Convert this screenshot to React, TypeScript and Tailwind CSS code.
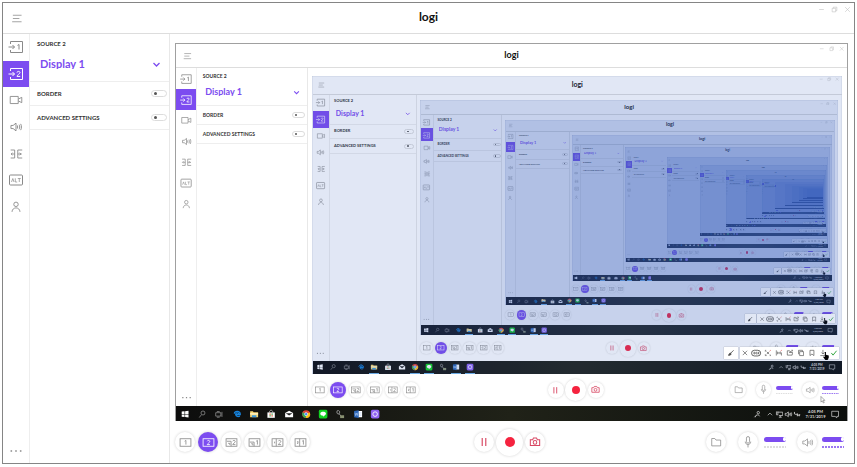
import React from "react";
import type { CSSProperties, ReactNode } from "react";
import { clsx } from "clsx";

/* Every mirrored screen is drawn at this share of the one that contains it. */
const MIRROR_RATIO = 0.788;
/* From this depth on a screen is too small for its texts and icons. */
const DISTANT_DEPTH = 12;
const MAX_DEPTH = 17;

/* Rescales Tailwind's spacing and text tokens for one mirror level. */
function tokens(depth: number): CSSProperties {
  const scale = Math.pow(MIRROR_RATIO, depth);
  const text = (size: number) => `${Math.max(1, Math.round(size * scale))}px`;
  return {
    "--spacing": `${4 * scale}px`,
    "--text-xs": text(5),
    "--text-sm": text(6),
    "--text-base": text(11),
    "--text-lg": text(12),
  } as CSSProperties;
}

type IconProps = { className?: string; box?: string; children: ReactNode; width?: number };

function Icon({ className = "size-4.5", box = "0 0 18 18", width = 1, children }: IconProps) {
  return (
    <svg
      viewBox={box}
      className={clsx("shrink-0", className)}
      fill="none"
      stroke="currentColor"
      strokeWidth={width}
      aria-hidden="true"
    >
      {children}
    </svg>
  );
}

function SourceIcon({ n }: { n: 1 | 2 }) {
  return (
    <Icon>
      <path d="M3.500 6V3.500h12v11h-12V12M1.500 9h6M5.500 7l2 2-2 2" />
      {n === 1 ? <path d="M10.500 7.400 12 6.500v5" /> : <path d="M10 7.600c0-1.600 3-1.600 3 0 0 1.200-3 2.300-3 3.800h3.200" />}
    </Icon>
  );
}

const speaker = (
  <>
    <path d="M2.500 7h2.800L9 4v10l-3.700-3H2.500z" />
    <path d="M11 7v4M13 6c1 1.600 1 4.400 0 6M15 5c1.300 2.400 1.300 5.600 0 8" />
  </>
);

const navItems: { name: string; icon: ReactNode }[] = [
  { name: "Source 1", icon: <SourceIcon n={1} /> },
  { name: "Source 2", icon: <SourceIcon n={2} /> },
  {
    name: "Camera",
    icon: (
      <Icon className="size-4">
        <path d="M2.500 5h9v8h-9zM11.500 8l4-2v6l-4-2" />
      </Icon>
    ),
  },
  { name: "Audio", icon: <Icon className="size-3.5" width={1.2}>{speaker}</Icon> },
  {
    name: "Transitions",
    icon: (
      <Icon className="size-4">
        <path d="M3 4.500h4.500v9H3M4 9h3.500M5 7.500 3.500 9 5 10.500M16 4.500h-5v9h5M11 9h4.500M13 7.500 14.500 9 13 10.500" />
      </Icon>
    ),
  },
  {
    name: "Alt",
    icon: (
      <Icon>
        <rect x="2.500" y="4" width="13" height="10" rx="1" />
        <path d="m4.500 11 1.300-3.500L7 11M8.300 7.300V11h1.900M10.800 7.500h3M12.300 7.500V11" strokeWidth=".7" />
      </Icon>
    ),
  },
  {
    name: "Account",
    icon: (
      <Icon className="size-4">
        <circle cx="9" cy="6" r="2.500" />
        <path d="M4.500 14.500c.3-6 8.700-6 9 0" />
      </Icon>
    ),
  },
];

function Toggle({ label }: { label: string }) {
  return (
    <label className="flex h-6 items-center justify-between border-b border-[#eeeeee] pr-0.5 pl-1.75 text-sm leading-none font-bold whitespace-nowrap text-[#333333]">
      {label}
      <input
        type="checkbox"
        className="flex h-1.75 w-4 shrink-0 appearance-none items-center rounded-full border border-[#dcdcdc] bg-white px-0.5 before:block before:size-0.75 before:rounded-full before:bg-[#555555] before:content-['']"
      />
    </label>
  );
}

function RoundButton({ name, className, children }: { name: string; className: string; children: ReactNode }) {
  return (
    <button
      type="button"
      aria-label={name}
      className={clsx(
        "flex shrink-0 items-center justify-center rounded-full shadow-[0_0_calc(var(--spacing)*0.75)_rgba(0,0,0,0.18)]",
        className,
      )}
    >
      {children}
    </button>
  );
}

const one = "M0 1 1.500 0v5";
const two = "M0 1c.3-1.500 3-1.300 3 .3C3 2.700 0 3.800 0 5h3.200";

const layouts: { name: string; art: ReactNode }[] = [
  { name: "Source 1 only", art: <path d={one} transform="translate(8 6.500)" /> },
  { name: "Source 2 only", art: <path d={two} transform="translate(7.500 6.500)" /> },
  {
    name: "Source 2 with inset",
    art: (
      <>
        <path d="M3.500 7.500h5v6M5 10h2v2" />
        <path d={two} transform="translate(10.500 6.500)" />
      </>
    ),
  },
  {
    name: "Source 1 with inset",
    art: (
      <>
        <path d="M3.500 8.500h5v5M5 10.500h2v2" />
        <path d={one} transform="translate(11 6.500)" />
      </>
    ),
  },
  {
    name: "Narrow 1, wide 2",
    art: (
      <>
        <path d="M7.500 4.500v9M5.500 8v2" />
        <path d={two} transform="translate(10 6.500)" />
      </>
    ),
  },
  {
    name: "Split 2 and 1",
    art: (
      <>
        <path d="M8 4.500v9M5 8h1.200v1L5 10h1.300" />
        <path d={one} transform="translate(11 6.500)" />
      </>
    ),
  },
];

function Level({ name, active }: { name: string; active: boolean }) {
  return (
    <div className="flex w-5.5 shrink-0 flex-col gap-1">
      <input
        type="range"
        aria-label={name}
        defaultValue={100}
        className="block h-1.25 w-full appearance-none rounded-full bg-[#7c4cf0] [&::-webkit-slider-thumb]:h-1 [&::-webkit-slider-thumb]:w-0.75 [&::-webkit-slider-thumb]:appearance-none [&::-webkit-slider-thumb]:rounded-full [&::-webkit-slider-thumb]:bg-white"
      />
      <svg viewBox="0 0 22 2" className={clsx("h-0.5 w-full", active ? "text-[#7c4cf0]" : "text-[#d4d4d4]")} aria-hidden="true">
        <path d="M0 1h22" stroke="currentColor" strokeWidth="1.500" strokeDasharray="2 1" />
      </svg>
    </div>
  );
}

function Controls() {
  return (
    <div className="mr-1 grid min-h-0 flex-1 grid-cols-[1fr_auto_1fr] items-center text-[#8a8a8a]">
      <div className="flex gap-0.75">
        {layouts.map((layout, i) => (
          <RoundButton
            key={layout.name}
            name={layout.name}
            className={clsx("size-5", i === 1 ? "bg-[#7c4cf0] text-white" : "bg-white")}
          >
            <Icon className="size-3.75">
              <rect x="2.500" y="4.500" width="13" height="9" />
              {layout.art}
            </Icon>
          </RoundButton>
        ))}
      </div>
      <div className="flex items-center gap-0.5 text-[#d84863]">
        <RoundButton name="Pause" className="size-5 bg-white">
          <Icon className="size-4">
            <path d="M7 4.500v9M11 4.500v9" strokeWidth="1.300" />
          </Icon>
        </RoundButton>
        <RoundButton name="Record" className="size-6.75 bg-white">
          <span className="size-2.5 rounded-full bg-[#f5233f]" />
        </RoundButton>
        <RoundButton name="Take snapshot" className="size-5 bg-white">
          <Icon className="size-3.5" width={1.3}>
            <path d="M3 6h3l1-2h4l1 2h3v7.500H3z" />
            <circle cx="9" cy="9.500" r="2.300" />
          </Icon>
        </RoundButton>
      </div>
      <div className="flex items-center justify-end">
        <RoundButton name="Open folder" className="mr-3 size-5 bg-white">
          <Icon className="size-3.5">
            <path d="M3.500 4.500h4l1.500 2h6v7.500H3.500z" />
          </Icon>
        </RoundButton>
        <RoundButton name="Microphone" className="mr-1.5 size-5 bg-white">
          <Icon className="size-3.5">
            <rect x="7" y="2" width="4" height="8.500" rx="2" />
            <path d="M5.500 8.500c0 5 7 5 7 0M9 12.500V16" />
          </Icon>
        </RoundButton>
        <Level name="Microphone volume" active={false} />
        <RoundButton name="Speaker" className="mr-1.25 ml-2.75 size-5 bg-white">
          <Icon className="size-3.25">{speaker}</Icon>
        </RoundButton>
        <Level name="Speaker volume" active />
      </div>
    </div>
  );
}

const apps: { name: string; open?: boolean; art: ReactNode }[] = [
  {
    name: "Start",
    art: <path d="M3 4.500 8 4v4.700H3zM9 3.800l6-.8v5.700H9zM3 9.500h5v4.700l-5-.7zM9 9.500h6V15l-6-.8z" fill="white" />,
  },
  {
    name: "Search",
    art: <path d="M7.500 10.500 4 15M14 7a3.500 3.500 0 1 1-7 0 3.500 3.500 0 0 1 7 0z" stroke="#bbb" />,
  },
  { name: "Task view", art: <path d="M3 6.500h9v6H3zM14 5v9M5 4.500h5M5 14.500h5" stroke="#bbb" /> },
  {
    name: "Edge",
    art: <path d="M4 8c1-5 10-5 10.500 1v1H6.500c.5 4 5 3.500 7.500 2.500M6.500 9c.5-3 5-3 5.500 0" stroke="#1683dd" strokeWidth="2.200" />,
  },
  {
    name: "Files",
    open: true,
    art: (
      <>
        <path d="M2 4h5l1 1.500h8v9H2z" fill="#f7d774" />
        <path d="M5 11h8v3.500H5z" fill="#3b9be0" />
        <path d="M2 7h14v3H2z" fill="#fff0b8" />
      </>
    ),
  },
  {
    name: "Store",
    art: (
      <>
        <path d="M2.500 6h13v9.500h-13z" fill="white" />
        <path d="M6 6c0-5 6-5 6 0" stroke="white" />
        <path d="M6 8h2.500v2H6zM9.500 11H12v2H9.500z" fill="#e35b3d" />
        <path d="M9.500 8H12v2H9.500zM6 11h2.500v2H6z" fill="#45a44a" />
      </>
    ),
  },
  {
    name: "Mail",
    art: (
      <>
        <path d="m2 7 7-4 7 4v7.500H2z" fill="white" />
        <path d="m3 7.500 6 4 6-4z" fill="#222" />
      </>
    ),
  },
  {
    name: "Chrome",
    open: true,
    art: (
      <>
        <circle cx="9" cy="9" r="7" fill="#e44335" />
        <path d="M9 9 3 5.500A7 7 0 0 0 9 16z" fill="#33a852" />
        <path d="m9 9 6.500-3A7 7 0 0 1 8.500 16z" fill="#fbc116" />
        <circle cx="9" cy="9" r="2.800" fill="#4587f3" stroke="white" />
      </>
    ),
  },
  {
    name: "Line",
    open: true,
    art: (
      <>
        <rect x="1.500" y="1.500" width="15" height="15" rx="2.500" fill="#12d321" />
        <path d="M4 8c0-4.500 10-4.500 10 0 0 2.500-3 4-5 5.500V12c-3 0-5-1.500-5-4z" fill="white" />
      </>
    ),
  },
  {
    name: "Device tool",
    art: (
      <>
        <path d="M4 3c3-1 5 1 4 4L6.500 9c-3 0-4-3-2.500-6zM7 8l4 5" stroke="#999" strokeWidth="1.600" />
        <path d="M9 11h7v5H9z" fill="#8a9272" />
      </>
    ),
  },
  {
    name: "Word",
    open: true,
    art: (
      <>
        <path d="M9 3.500h7v11H9z" fill="white" />
        <path d="M2 3.500 10 2v14l-8-1.500z" fill="#2b66b8" />
        <path d="m3.500 6.500 1 5 1.500-4 1.500 4 1-5M11 6.500h4M11 9h4M11 11.500h4" stroke="#bcd3f3" />
      </>
    ),
  },
  {
    name: "Capture",
    open: true,
    art: (
      <>
        <rect x="1.500" y="1.500" width="15" height="15" rx="3" fill="#8e62f2" />
        <circle cx="9" cy="9" r="4" stroke="white" strokeWidth="1.500" />
      </>
    ),
  },
];

function Taskbar({ outlined }: { outlined: boolean }) {
  return (
    <div className="flex h-5 shrink-0 items-center justify-between bg-linear-to-r from-[#0d0d0d] via-[#202218] to-[#0c0f0d]">
      <div className="flex h-full">
        {apps.map((app) => (
          <button
            key={app.name}
            type="button"
            aria-label={app.name}
            className="flex h-full w-5.5 items-center justify-center text-transparent"
          >
            <span
              className={clsx(
                "flex h-full w-4 items-center justify-center",
                outlined && app.open && "border-b border-[#76b9ed]",
              )}
            >
              <Icon className="size-3.25">{app.art}</Icon>
            </span>
          </button>
        ))}
      </div>
      <div className="flex h-full items-center gap-0.25 pr-2.25 text-[#dddddd]">
        <Icon className="mr-1 size-2.75" width={1.5}>
          <circle cx="11" cy="5.500" r="2.500" />
          <path d="M5 15c0-6 7-6 9-2M3 15l4-4" />
        </Icon>
        <Icon className="size-2.5" width={1.5}>
          <path d="m4 12 5-5 5 5" />
        </Icon>
        <Icon className="size-2.75" width={1.5}>
          <path d="M5 4.500h11v7H8M3 3v7h3V3M11 12v3M8 15h6" />
        </Icon>
        <Icon className="size-2.75" width={1.5}>
          {speaker}
        </Icon>
        <Icon className="mr-0.75 size-2.75" width={1.8}>
          <path d="M3 4v4c2 2 4 0 6 2s4 0 6 0M9 7v6M13 9v4" />
        </Icon>
        <div className="min-w-6.5 text-center text-xs leading-1.75 font-bold whitespace-nowrap">
          4:05 PM
          <br />
          7/31/2019
        </div>
        <Icon className="ml-1 size-3.25" width={1.2}>
          <path d="M3 4h12v9h-3v2.500L9 13H3z" />
        </Icon>
      </div>
    </div>
  );
}

const snipTools: { name: string; art: ReactNode }[] = [
  { name: "Discard", art: <path d="m4 4 10 10M14 4 4 14" /> },
  {
    name: "Recognise text",
    art: (
      <>
        <rect x="1" y="4" width="16" height="10" rx="5" />
        <path d="M5 7.500h2v3H5zM11 7.500H8.800v3H11M12.500 11V7.500H14v2h-1.500l1.500 1.500" strokeWidth="1" />
      </>
    ),
  },
  {
    name: "Crop",
    art: (
      <>
        <path d="M3 6V3h2M3 12v3h3M6 6l6 6M11.500 6.500 6 12M13 15h2v-2" />
        <path d="m12.500 5 4-3" stroke="#e05f5f" />
      </>
    ),
  },
  {
    name: "Scroll capture",
    art: (
      <>
        <path d="M3 3v12M6 6v6M6 9h6M12 6v6M15 8v7" />
        <path d="m12.500 5 4-3" stroke="#e05f5f" />
      </>
    ),
  },
  { name: "Save to folder", art: <path d="M3 4h5l1 2h4M3 4v10h11l1-6H7M12 3h4v3" /> },
  { name: "Copy", art: <path d="M6 6h9v9H6zM3.500 12V3h9v3" /> },
  { name: "Pin", art: <path d="M4.500 3h9v12L9 11.500 4.500 15z" /> },
  { name: "Download", art: <path d="M9 2v9M5.500 8 9 11.500 12.500 8M3 15h12" /> },
  { name: "Confirm", art: <path d="m3 9 4 5 8-10" stroke="#2fa43c" strokeWidth="2.200" /> },
];

/* The capture toolbar floats over the selected part of the screen. */
function SnipToolbar() {
  return (
    <div className="absolute right-1 bottom-4.75 flex h-3.75 gap-0.5 text-[#444444]">
      <button
        type="button"
        aria-label="Brush"
        className="flex h-full w-4.5 items-center justify-center bg-white shadow-[0_0_1px_rgba(0,0,0,0.4)]"
      >
        <Icon className="size-2.5" width={1.8}>
          <path d="m15 3-7 7M8 9c-3 0-2 4-5 5 3 1 7 0 6-4" fill="currentColor" />
        </Icon>
      </button>
      <div className="flex h-full items-center bg-white shadow-[0_0_1px_rgba(0,0,0,0.4)]">
        {snipTools.map((tool) => (
          <button
            key={tool.name}
            type="button"
            aria-label={tool.name}
            className="flex h-full w-3.5 items-center justify-center"
          >
            <Icon className={tool.name === "Recognise text" ? "size-3.25" : "size-2.5"} width={1.4}>
              {tool.art}
            </Icon>
          </button>
        ))}
      </div>
      <svg viewBox="0 0 12 14" className="absolute top-1.75 right-3 h-2.5 w-2.5" aria-hidden="true">
        <path d="M4 0h2v5l5 1v4l-2 4H5L1 9l1-1 2 1z" fill="black" />
      </svg>
    </div>
  );
}

function WindowButtons() {
  return (
    <div className="flex items-start justify-end gap-1.5 pt-0.75 pr-0.75 text-[#c0c0c0]">
      <button type="button" aria-label="Minimize">
        <Icon className="size-1.75" width={1.5}>
          <path d="M3 9h12" />
        </Icon>
      </button>
      <button type="button" aria-label="Restore">
        <Icon className="size-1.75" width={1.5}>
          <path d="M3 6h9v9H3zM6 6V3h9v9h-3" />
        </Icon>
      </button>
      <button type="button" aria-label="Close">
        <Icon className="size-1.75" width={1.5}>
          <path d="m3 3 12 12M15 3 3 15" />
        </Icon>
      </button>
    </div>
  );
}

/* A far mirror level, reduced to its marker, its bottom bar and the next level. */
function DistantScreen({ depth }: { depth: number }) {
  return (
    <div style={tokens(depth)} className="relative flex h-120 min-w-0 flex-col overflow-hidden bg-white">
      <div className="flex min-h-0 flex-1">
        <div className="w-6.75 shrink-0 pt-14.5">
          {depth < 13 && <div className="h-6.75 bg-[#7c4cf0]" />}
        </div>
        <div className="w-35 shrink-0" />
        <div className="min-w-0 flex-1 px-1.75 pt-10">
          <div className="relative">
            {depth < MAX_DEPTH && <DistantScreen depth={depth + 1} />}
            <div className="absolute inset-0 bg-[#3760ba]/15" />
          </div>
        </div>
      </div>
      <div className="h-5 shrink-0 bg-[#14181a]" />
    </div>
  );
}

function Screen({ depth }: { depth: number }) {
  const mirrored = depth > 0;
  const outlined = depth < 6;
  return (
    <div
      style={tokens(depth)}
      inert={mirrored}
      className={clsx(
        "relative flex min-w-0 flex-col overflow-hidden bg-white",
        depth === 0 && "border border-[#858585]",
        depth === 1 && "h-120 border-x border-t border-[#a0a0a0]",
        depth > 1 && "h-120 px-0.25 shadow-[inset_0_0_1px_#64748b]",
      )}
    >
      <header
        className={clsx(
          "grid h-7.75 shrink-0 grid-cols-[1fr_auto_1fr]",
          outlined && "border-b border-[#dddddd]",
        )}
      >
        <button type="button" aria-label="Menu" className="flex w-6.75 items-center justify-center text-[#808080]">
          <Icon className="size-3.25">
            <path d="M4 4.500h12M4 9h9M3 13.500h13" />
          </Icon>
        </button>
        <h1 className="self-center pb-0.5 text-lg leading-none font-bold text-[#111111]">logi</h1>
        <WindowButtons />
      </header>

      <div className="flex h-107.25 shrink-0">
        <nav
          className={clsx(
            "flex w-6.75 shrink-0 flex-col justify-between text-[#8a8a8a]",
            outlined && "border-r border-[#eeeeee]",
          )}
        >
          <div className="flex h-46.5 flex-col">
            {navItems.map((item) => (
              <button
                key={item.name}
                type="button"
                aria-label={item.name}
                className={clsx(
                  "flex min-h-0 flex-1 items-center justify-center",
                  item.name === "Source 2" && "bg-[#7c4cf0] text-white",
                )}
              >
                {item.icon}
              </button>
            ))}
          </div>
          <button type="button" aria-label="More" className="flex h-6 items-center justify-center">
            <Icon className="size-3.5">
              <path d="M2 9h2M8 9h2M14 9h2" strokeWidth="2" />
            </Icon>
          </button>
        </nav>

        <section
          className={clsx("w-35 shrink-0", outlined && "border-r border-[#e8e8e8]")}
        >
          <label className="relative block h-12 border-b border-[#eeeeee] pt-1.75 pl-1.75">
            <span className="block text-sm leading-none font-bold whitespace-nowrap text-[#333333]">SOURCE 2</span>
            <select className="mt-1.75 ml-0.75 block h-4.5 w-full appearance-none text-base leading-none font-bold text-[#7c4cf0]">
              <option>Display 1</option>
            </select>
            <span className="pointer-events-none absolute right-2 bottom-3 text-[#7c4cf0]">
              <Icon className="size-2.25" width={2.6}>
                <path d="m3 6 6 6 6-6" />
              </Icon>
            </span>
          </label>
          <Toggle label="BORDER" />
          <Toggle label="ADVANCED SETTINGS" />
        </section>

        <main className={clsx("flex min-w-0 flex-1 flex-col pt-2.25 pr-1.5", mirrored ? "pl-1.5" : "pl-1.25")}>
          <div className="relative shrink-0">
            {depth + 1 < DISTANT_DEPTH ? <Screen depth={depth + 1} /> : <DistantScreen depth={depth + 1} />}
            {mirrored && (
              <>
                <div className="absolute inset-0 bg-[#3760ba]/15" />
                <SnipToolbar />
              </>
            )}
          </div>
          <Controls />
        </main>
      </div>

      {mirrored && <Taskbar outlined={outlined} />}

      {depth === 1 && (
        <svg viewBox="0 0 12 18" className="absolute right-6.5 bottom-5.5 h-2.5 w-2" aria-hidden="true">
          <path d="M1 1v13l3-3 2.500 5 2-1L6 10h4z" fill="white" stroke="#444" />
        </svg>
      )}
    </div>
  );
}

export default function App() {
  return (
    <div className="min-h-screen bg-white p-0.5 font-[Lato,'Noto_Sans',sans-serif]">
      <Screen depth={0} />
    </div>
  );
}
